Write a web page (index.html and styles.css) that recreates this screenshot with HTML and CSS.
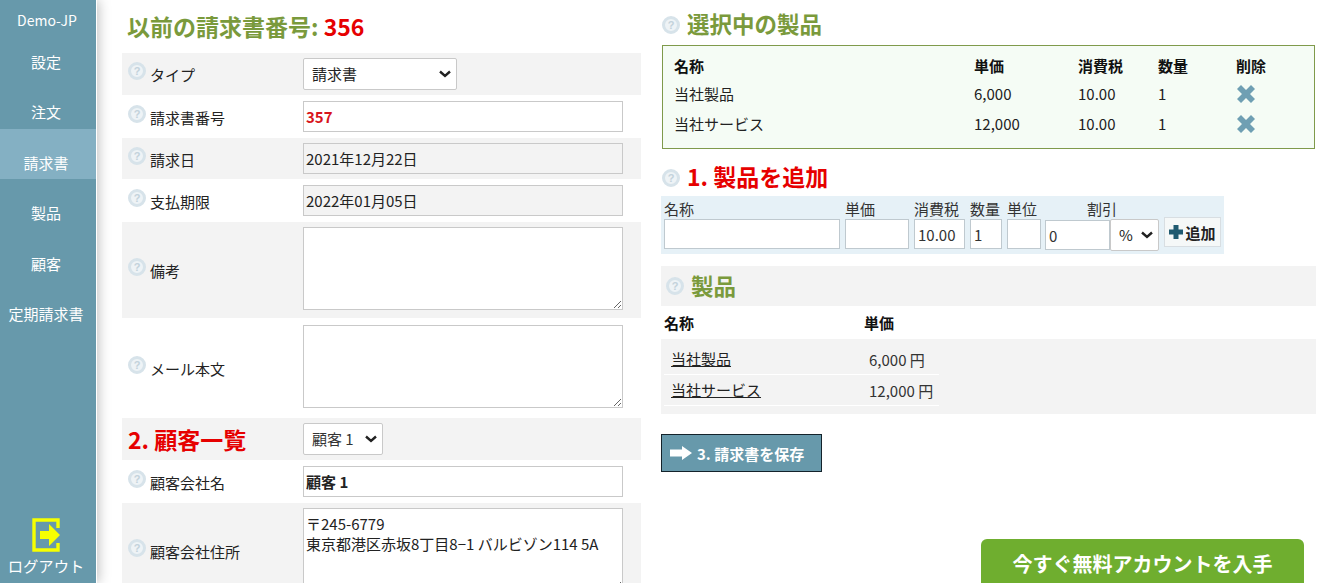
FILE: index.html
```html
<!DOCTYPE html>
<html lang="ja">
<head>
<meta charset="utf-8">
<title>請求書</title>
<link rel="stylesheet" href="styles.css">
</head>
<body>
<div class="app">
  <aside class="sidebar">
    <div class="brand">Demo-JP</div>
    <nav class="nav">
      <a class="nav-item">設定</a>
      <a class="nav-item">注文</a>
      <a class="nav-item active">請求書</a>
      <a class="nav-item">製品</a>
      <a class="nav-item">顧客</a>
      <a class="nav-item">定期請求書</a>
    </nav>
    <a class="logout">
      <svg class="logout-icon" width="30" height="34" viewBox="0 0 30 34"><path d="M26 10V2H2v30h24v-7" fill="none" stroke="#f6ff00" stroke-width="3.4"/><path d="M8 13h9V6l11 11-11 11v-7H8z" fill="#f6ff00"/></svg>
      <span>ログアウト</span>
    </a>
  </aside>
  <main class="content">
    <section class="col-left">
      <h1 class="page-title">以前の請求書番号: <span class="red">356</span></h1>
      <div class="form">
        <div class="row gray h42">
          <div class="label"><i class="help">?</i><span>タイプ</span></div>
          <div class="field"><select class="select select-type"><option>請求書</option></select></div>
        </div>
        <div class="row h43">
          <div class="label"><i class="help">?</i><span>請求書番号</span></div>
          <div class="field f6"><input class="input number" value="357"></div>
        </div>
        <div class="row gray h41">
          <div class="label"><i class="help">?</i><span>請求日</span></div>
          <div class="field"><input class="input disabled" value="2021年12月22日"></div>
        </div>
        <div class="row h43">
          <div class="label"><i class="help">?</i><span>支払期限</span></div>
          <div class="field f6"><input class="input disabled" value="2022年01月05日"></div>
        </div>
        <div class="row gray h96">
          <div class="label"><i class="help">?</i><span>備考</span></div>
          <div class="field"><textarea class="area"></textarea></div>
        </div>
        <div class="row h100">
          <div class="label"><i class="help">?</i><span>メール本文</span></div>
          <div class="field f7"><textarea class="area"></textarea></div>
        </div>
        <div class="row gray h42">
          <div class="label"><h2 class="sub-red">2. 顧客一覧</h2></div>
          <div class="field"><select class="select select-client"><option>顧客 1</option></select></div>
        </div>
        <div class="row h43">
          <div class="label"><i class="help">?</i><span>顧客会社名</span></div>
          <div class="field f6"><input class="input bold" value="顧客 1"></div>
        </div>
        <div class="row gray h96">
          <div class="label"><i class="help">?</i><span>顧客会社住所</span></div>
          <div class="field"><textarea class="area">〒245-6779
東京都港区赤坂8丁目8−1 バルビゾン114 5A</textarea></div>
        </div>
      </div>
    </section>
    <section class="col-right">
      <h2 class="section-title"><i class="help">?</i>選択中の製品</h2>
      <div class="selected">
        <div class="sel-row head"><span>名称</span><span>単価</span><span>消費税</span><span>数量</span><span>削除</span></div>
        <div class="sel-row"><span>当社製品</span><span>6,000</span><span>10.00</span><span>1</span><svg class="del" width="20" height="20" viewBox="0 0 20 20"><path d="M5 1l5 5 5-5 4 4-5 5 5 5-4 4-5-5-5 5-4-4 5-5-5-5z" fill="#6f9fb3"/></svg></div>
        <div class="sel-row"><span>当社サービス</span><span>12,000</span><span>10.00</span><span>1</span><svg class="del" width="20" height="20" viewBox="0 0 20 20"><path d="M5 1l5 5 5-5 4 4-5 5 5 5-4 4-5-5-5 5-4-4 5-5-5-5z" fill="#6f9fb3"/></svg></div>
      </div>
      <h2 class="section-title add-title"><i class="help">?</i><span class="red">1. 製品を追加</span></h2>
      <div class="add-box">
        <label class="add-f w176"><span>名称</span><input class="add-input"></label>
        <label class="add-f w64"><span>単価</span><input class="add-input"></label>
        <label class="add-f w51"><span>消費税</span><input class="add-input" value="10.00"></label>
        <label class="add-f w32"><span>数量</span><input class="add-input" value="1"></label>
        <label class="add-f w34"><span>単位</span><input class="add-input"></label>
        <div class="add-f discount">
          <span class="discount-label">割引</span>
          <div class="discount-controls"><input class="add-input dis-input" value="0"><select class="select dis-select"><option>%</option></select></div>
        </div>
        <button class="add-btn"><svg width="14" height="14" viewBox="0 0 14 14"><path d="M4.500 0h5v4.500h4.500v5h-4.500v4.500h-5v-4.500h-4.500v-5h4.500z" fill="#1f5a70"/></svg>追加</button>
      </div>
      <div class="products-head"><i class="help">?</i>製品</div>
      <div class="prod-cols"><span>名称</span><span>単価</span></div>
      <div class="prod-list">
        <div class="prod-row"><a>当社製品</a><span>6,000 円</span></div>
        <div class="prod-row"><a>当社サービス</a><span>12,000 円</span></div>
      </div>
      <button class="save"><svg width="22" height="14" viewBox="0 0 22 14"><path d="M0 3.500h12V0l10 7-10 7v-3.500H0z" fill="#fff"/></svg>3. 請求書を保存</button>
    </section>
  </main>
  <a class="cta">今すぐ無料アカウントを入手</a>
</div>
</body>
</html>
```
FILE: styles.css
```css
* { box-sizing: border-box; }
html, body { margin: 0; height: 100%; overflow: hidden; }
body {
  font-family: "Noto Sans CJK JP", "Noto Sans", sans-serif;
  font-size: 15px;
  color: #222;
  background: #fff;
}
.app { display: flex; height: 583px; }
.sidebar {
  width: 97px;
  flex: none;
  background: #6799ab;
  border-right: 1px solid #fff;
  box-shadow: 1px 0 12px rgba(0, 0, 0, .28);
  color: #fff;
  display: flex;
  flex-direction: column;
  align-items: stretch;
  text-align: center;
  z-index: 1;
}
.brand { font-size: 14px; line-height: 20px; padding-top: 10px; padding-right: 2px; height: 28px; }
.nav-item { display: block; height: 50.4px; padding-top: 24px; padding-right: 4px; line-height: 20px; font-size: 15px; color: #fff; }
.nav-item.active { background: #84b0c3; }
.logout { margin-top: auto; display: flex; flex-direction: column; align-items: center; font-size: 15.3px; line-height: 20px; padding-bottom: 8px; padding-right: 4px; gap: 3px; }
.logout-icon { display: block; margin-left: 1px; }

.content { display: flex; flex: 1; gap: 20px; padding-left: 25px; }
.col-left { width: 519px; flex: none; }
.col-right { width: 655px; flex: none; }
.red { color: #e60000; }
.page-title {
  margin: 0;
  padding-left: 5px;
  height: 53px;
  line-height: 52px;
  font-size: 23px;
  font-weight: 700;
  color: #7a9a3c;
  white-space: nowrap;
}
.row { display: flex; }
.gray { background: #f3f3f3; }
.h41 { height: 41px; }
.h42 { height: 42px; }
.h43 { height: 43px; }
.h96 { height: 96px; }
.h100 { height: 100px; }
.label {
  width: 181px;
  flex: none;
  padding-left: 6px;
  display: flex;
  align-items: center;
  gap: 4px;
}
.label span { position: relative; top: 1px; line-height: 20px; }
.help {
  display: inline-block;
  flex: none;
  width: 18px;
  height: 18px;
  border: 3px solid #d7e3ea;
  border-radius: 50%;
  background: #eef3f6;
  color: #c3d2db;
  font: normal 700 11px/12px "Liberation Sans", sans-serif;
  text-align: center;
  position: relative;
  top: -3px;
}
.field { padding-top: 5px; width: 320px; }
.f6 { padding-top: 6px; }
.f7 { padding-top: 7px; }
.input, .area, .select {
  font-family: inherit;
  font-size: 15px;
  color: #222;
  border: 1px solid #c9c9c9;
  background: #fff;
  display: block;
  margin: 0;
}
.input { width: 320px; height: 31px; padding: 0 2px; }
.disabled { background: #f3f3f3; }
.number { color: #d8141c; font-weight: 700; }
.bold { font-weight: 700; }
.area { width: 320px; height: 83px; padding: 5px 2px 3px; line-height: 20px; resize: both; }
.select {
  height: 32px;
  padding-left: 3px;
  border-radius: 2px;
  appearance: none;
  line-height: 28px;
  background: #fff url("data:image/svg+xml,%3Csvg xmlns='http://www.w3.org/2000/svg' width='12' height='8'%3E%3Cpath d='M1 1.500l5 4.500 5-4.500' fill='none' stroke='%23222' stroke-width='2.400'/%3E%3C/svg%3E") no-repeat right 5px center;
}
.select-type { width: 154px; padding-left: 8px; }
.select-client { width: 80px; padding-left: 8px; color: #333; }
.sub-red { margin: 0; font-size: 23px; font-weight: 700; color: #e60000; line-height: 44px; white-space: nowrap; }

.section-title {
  margin: 0;
  display: flex;
  align-items: center;
  gap: 7px;
  height: 45px;
  padding-left: 1px;
  font-size: 22.500px;
  font-weight: 700;
  color: #7a9a3c;
  white-space: nowrap;
}
.section-title .help { top: 2px; }
.selected {
  margin-left: 1px;
  width: 653px;
  height: 104px;
  border: 1px solid #7f9a4b;
  background: #f5fcf5;
  padding: 5px 11px;
}
.sel-row {
  display: grid;
  grid-template-columns: 300px 104px 80px 78px 40px;
  height: 30px;
  line-height: 30px;
  font-size: 15px;
  align-items: center;
}
.sel-row.head { height: 28px; font-weight: 700; color: #111; }
.del { display: block; }
.add-title { height: 47px; padding-top: 7px; font-size: 23px; }
.add-box {
  width: 563px;
  height: 58px;
  background: #e6f1f7;
  padding: 5px 3px 0;
  display: flex;
  gap: 5px;
  align-items: flex-start;
}
.add-f { display: flex; flex-direction: column; font-size: 15px; line-height: 18px; color: #333; }
.add-f > span { position: relative; top: -1px; white-space: nowrap; }
.w176 { width: 176px; }
.w64 { width: 64px; }
.w51 { width: 51px; }
.w32 { width: 32px; }
.w34 { width: 34px; }
.add-input {
  font-family: inherit;
  font-size: 15px;
  color: #333;
  width: 100%;
  height: 30px;
  border: 1px solid #bfc9cf;
  background: #fff;
  padding: 0 3px;
  margin: 0;
}
.discount { width: 114px; margin-left: -1px; }
.discount-label { padding-left: 42px; }
.discount-controls { display: flex; align-items: flex-start; }
.dis-input { width: 65px; margin-top: 1px; padding-left: 3px; }
.dis-select { width: 49px; height: 32px; border-color: #c9c9c9; padding-left: 8px; font-size: 15px; }
.add-btn {
  font-family: inherit;
  margin-top: 16px;
  width: 57px;
  height: 30px;
  border: 1px solid #d8dee2;
  background: #f5f8f8;
  font-size: 15px;
  font-weight: 700;
  color: #222;
  display: flex;
  align-items: center;
  justify-content: center;
  gap: 2px;
  padding: 0;
}
.products-head {
  margin-top: 12px;
  height: 40px;
  background: #f3f3f3;
  display: flex;
  align-items: center;
  gap: 7px;
  padding-left: 5px;
  padding-bottom: 2px;
  font-size: 22.500px;
  font-weight: 700;
  color: #7a9a3c;
}
.products-head .help { top: 1px; }
.prod-cols { display: grid; grid-template-columns: 200px 100px; height: 33px; line-height: 34px; padding-left: 3px; font-weight: 700; font-size: 15px; color: #111; }
.prod-list { background: #f3f3f3; height: 75px; padding: 5px 3px 0; }
.prod-row {
  width: 275px;
  height: 31px;
  border-bottom: 1px solid #fff;
  display: grid;
  grid-template-columns: 205px 70px;
  align-items: center;
  line-height: 30px;
}
.prod-row a { padding-left: 7px; text-decoration: underline; font-size: 15px; color: #222; }
.prod-row span { font-size: 15px; color: #333; position: relative; top: 1px; white-space: nowrap; }
.save {
  margin-top: 20px;
  width: 161px;
  height: 38px;
  display: flex;
  align-items: center;
  gap: 5px;
  padding: 0 0 0 8px;
  border: 1px solid #14232b;
  background: #6799ab;
  color: #fff;
  font-family: inherit;
  font-size: 15px;
  font-weight: 700;
  white-space: nowrap;
}
.cta {
  position: fixed;
  left: 981px;
  top: 539px;
  width: 323px;
  height: 60px;
  border-radius: 6px 6px 0 0;
  background: #6fae2f;
  color: #fff;
  font-size: 20px;
  font-weight: 700;
  line-height: 50px;
  text-align: center;
  z-index: 2;
}
```
